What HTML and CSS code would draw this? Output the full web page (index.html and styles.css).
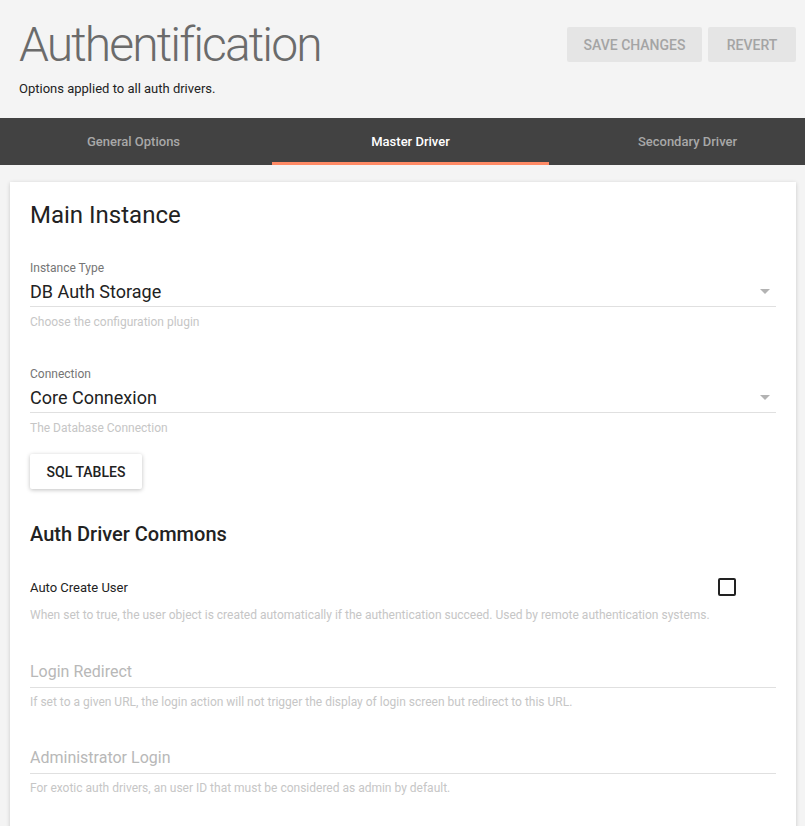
FILE: index.html
```html
<!DOCTYPE html>
<html>
<head>
<meta charset="utf-8">
<link rel="stylesheet" href="styles.css">
</head>
<body>
<div class="page">
  <header class="head">
    <div class="head-text">
      <h1 class="title">Authentification</h1>
      <p class="subtitle">Options applied to all auth drivers.</p>
    </div>
    <div class="actions">
      <button class="flat-btn save">SAVE CHANGES</button>
      <button class="flat-btn revert">REVERT</button>
    </div>
  </header>
  <nav class="tabs">
    <div class="tab">General Options</div>
    <div class="tab active">Master Driver</div>
    <div class="tab">Secondary Driver</div>
  </nav>
  <main class="card">
    <h2 class="section-title">Main Instance</h2>

    <div class="field select-field first">
      <div class="label">Instance Type</div>
      <div class="select">
        <span class="value">DB Auth Storage</span>
        <svg class="arrow" width="10" height="5" viewBox="0 0 10 5"><path d="M0 0 L10 0 L5 5 Z" fill="#b3b3b3"/></svg>
      </div>
      <div class="helper">Choose the configuration plugin</div>
    </div>

    <div class="field select-field second">
      <div class="label">Connection</div>
      <div class="select">
        <span class="value">Core Connexion</span>
        <svg class="arrow" width="10" height="5" viewBox="0 0 10 5"><path d="M0 0 L10 0 L5 5 Z" fill="#b3b3b3"/></svg>
      </div>
      <div class="helper">The Database Connection</div>
    </div>

    <button class="raised-btn">SQL TABLES</button>

    <h3 class="sub-title">Auth Driver Commons</h3>

    <div class="check-row">
      <span class="check-label">Auto Create User</span>
      <span class="checkbox"></span>
    </div>
    <div class="helper check-helper">When set to true, the user object is created automatically if the authentication succeed. Used by remote authentication systems.</div>

    <div class="field text-field">
      <div class="input"><span class="placeholder">Login Redirect</span></div>
      <div class="helper">If set to a given URL, the login action will not trigger the display of login screen but redirect to this URL.</div>
    </div>

    <div class="field text-field">
      <div class="input"><span class="placeholder">Administrator Login</span></div>
      <div class="helper">For exotic auth drivers, an user ID that must be considered as admin by default.</div>
    </div>
  </main>
</div>
</body>
</html>
```
FILE: styles.css
```css
html, body {
  margin: 0;
  padding: 0;
  background: #f4f4f4;
  font-family: Roboto, "Noto Sans", sans-serif;
  overflow: hidden;
}
.page {
  width: 805px;
  height: 826px;
  overflow: hidden;
}
.head {
  display: flex;
  justify-content: space-between;
  align-items: flex-start;
  padding: 0 9px 0 19px;
  height: 118px;
  box-sizing: border-box;
}
.title {
  margin: 18px 0 0 0;
  font-size: 48px;
  font-weight: 300;
  color: #6b6b6b;
  line-height: 54px;
  letter-spacing: -1.9px;
}
.subtitle {
  margin: 9px 0 0 0;
  font-size: 13px;
  color: #222;
  line-height: 16px;
}
.actions {
  display: flex;
  gap: 6px;
  margin-top: 27px;
}
.flat-btn {
  height: 35px;
  border: none;
  border-radius: 2px;
  background: #e5e5e5;
  color: #a4a4a4;
  font-family: Roboto, sans-serif;
  font-size: 14px;
  font-weight: 500;
  padding: 0 16px;
}
.save { width: 135px; }
.revert { width: 88px; }
.tabs {
  display: grid;
  grid-template-columns: repeat(3, 277px);
  margin-left: -5px;
  height: 47px;
  background: #424242;
  width: 810px;
}
.tab {
  display: flex;
  align-items: center;
  justify-content: center;
  font-size: 13px;
  font-weight: 500;
  color: #a8a8a8;
  box-sizing: border-box;
  padding-bottom: 1px;
}
.tab.active {
  color: #fff;
  border-bottom: 3px solid #ff8a65;
  padding-top: 3px;
}
.card {
  margin: 17px 9px 0 10px;
  background: #fff;
  box-shadow: 0 1px 4px rgba(0,0,0,0.18);
  padding: 19px 20px 40px 20px;
  min-height: 700px;
}
.section-title {
  margin: 0;
  font-size: 24px;
  font-weight: 400;
  color: #222;
  line-height: 28px;
}
.field.first { margin-top: 32px; }
.field.second { margin-top: 38px; }
.label {
  font-size: 12px;
  color: #757575;
  line-height: 14px;
}
.select {
  display: flex;
  align-items: center;
  justify-content: space-between;
  height: 30px;
  border-bottom: 1px solid #e0e0e0;
  margin-top: 1px;
}
.value {
  font-size: 18px;
  color: #222;
}
.arrow { margin-right: 6px; }
.helper {
  font-size: 12px;
  color: #c6c6c6;
  line-height: 14px;
  margin-top: 8px;
}
.raised-btn {
  margin-top: 19px;
  height: 35px;
  width: 112px;
  border: none;
  border-radius: 2px;
  background: #fff;
  color: #222;
  font-family: Roboto, sans-serif;
  font-size: 14px;
  font-weight: 500;
  box-shadow: 0 1px 4px rgba(0,0,0,0.25);
  display: block;
}
.sub-title {
  margin: 33px 0 0 0;
  font-size: 20px;
  font-weight: 500;
  color: #222;
  line-height: 24px;
}
.check-row {
  display: flex;
  align-items: center;
  justify-content: space-between;
  margin-top: 31px;
  padding-right: 40px;
  height: 20px;
}
.check-label {
  font-size: 13px;
  color: #222;
}
.checkbox {
  width: 14px;
  height: 14px;
  border: 2px solid #222;
  border-radius: 2px;
}
.check-helper { margin-top: 11px; }
.text-field { margin-top: 34px; }
.input {
  height: 31px;
  border-bottom: 1px solid #e0e0e0;
  display: flex;
  align-items: center;
}
.placeholder {
  font-size: 16px;
  color: #b8b8b8;
}
.text-field .helper { margin-top: 7px; }
.text-field + .text-field { margin-top: 33px; }
```
